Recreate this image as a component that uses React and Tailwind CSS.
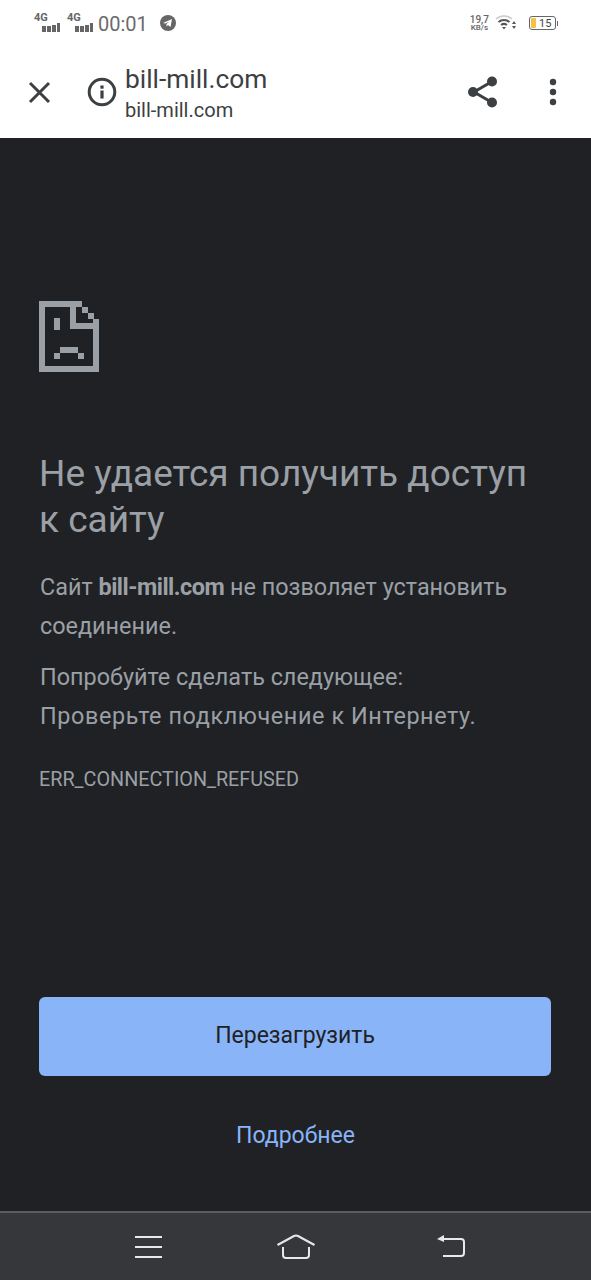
import React from "react";

const font = { fontFamily: "Roboto, sans-serif" };

const Signal = () => (
  <span className="flex flex-col items-start w-[27px]">
    <span className="text-[11px] leading-[10px] font-bold text-[#666]">4G</span>
    <svg width="27" height="10" viewBox="0 0 27 10" className="ml-[1px] mt-[-1px]">
      <rect x="7" y="4" width="4" height="6" fill="#666" />
      <rect x="12" y="4" width="4" height="6" fill="#666" />
      <rect x="17" y="3" width="4" height="7" fill="#666" />
      <rect x="22" y="1" width="3" height="9" fill="#666" />
    </svg>
  </span>
);

const StatusBar = () => (
  <div className="h-[46px] flex items-start justify-between pl-[34px] pr-[33px] pt-[13px]">
    <div className="flex items-start gap-[6px]">
      <Signal />
      <Signal />
      <span className="text-[20px] leading-[22px] text-[#6b6b6b] ml-[-2px]">00:01</span>
      <svg width="16" height="16" viewBox="0 0 16 16" className="ml-[6px] mt-[2px]">
        <circle cx="8" cy="8" r="8" fill="#666" />
        <path d="M3 8l9-4-1.5 8-2.5-2-1.5 1.5V9l3-2.5-4 2z" fill="#fff" />
      </svg>
    </div>
    <div className="flex items-start">
      <div className="flex flex-col items-center text-[#666] font-medium text-[9px] leading-[8px] mt-[2px]">
        <span className="text-[10px] leading-[9px]">19,7</span>
        <span className="text-[8px]">KB/s</span>
      </div>
      <svg width="22" height="18" viewBox="0 0 22 18" className="ml-[6px]">
        <path d="M1 6a12 12 0 0 1 16 0" fill="none" stroke="#ccc" strokeWidth="1.6" />
        <path d="M3.5 9a9 9 0 0 1 11 0" fill="none" stroke="#555" strokeWidth="2" />
        <path d="M6 12a5 5 0 0 1 6 0" fill="none" stroke="#555" strokeWidth="2" />
        <path d="M7 14h4l-2 2.5z" fill="#555" />
        <path d="M19 8l2 3h-4zM17 13h4l-2 3z" fill="#555" />
      </svg>
      <div className="ml-[12px] mt-[3px] flex items-center">
        <div className="w-[27px] h-[14px] border border-[#666] rounded-[3px] flex items-center p-[1px]">
          <span className="w-[5px] h-full bg-[#f5c242] rounded-[1px]" />
          <span className="text-[11px] leading-none text-[#444] ml-[3px]">15</span>
        </div>
        <span className="w-[1px] h-[5px] bg-[#666] ml-[1px]" />
      </div>
    </div>
  </div>
);

const Toolbar = () => (
  <div className="h-[92px] flex items-center pl-[28px] pr-[34px]">
    <svg width="23" height="23" viewBox="0 0 23 23">
      <path d="M2 2l19 19M21 2L2 21" stroke="#3c4043" strokeWidth="3" fill="none" />
    </svg>
    <svg width="30" height="30" viewBox="0 0 30 30" className="ml-[36px]">
      <circle cx="15" cy="15" r="12.8" stroke="#3c4043" strokeWidth="3" fill="none" />
      <rect x="13.4" y="13.5" width="3.2" height="8" fill="#3c4043" />
      <rect x="13.4" y="8.5" width="3.2" height="3.2" fill="#3c4043" />
    </svg>
    <div className="ml-[8px] flex flex-col mt-[5px]">
      <span className="text-[26.3px] leading-[31px] text-[#3c4043]">bill-mill.com</span>
      <span className="text-[20px] leading-[30px] text-[#3c4043]">bill-mill.com</span>
    </div>
    <svg width="32" height="34" viewBox="0 0 32 34" className="ml-auto">
      <path d="M25 6.5L7 17l18 10.5" stroke="#3c4043" strokeWidth="3" fill="none" />
      <circle cx="25" cy="6.5" r="5" fill="#3c4043" />
      <circle cx="6" cy="17" r="5" fill="#3c4043" />
      <circle cx="25" cy="27.5" r="5" fill="#3c4043" />
    </svg>
    <svg width="8" height="28" viewBox="0 0 8 28" className="ml-[50px]">
      <circle cx="4" cy="4" r="3.2" fill="#3c4043" />
      <circle cx="4" cy="14" r="3.2" fill="#3c4043" />
      <circle cx="4" cy="24" r="3.2" fill="#3c4043" />
    </svg>
  </div>
);

const SadPage = () => (
  <svg width="60" height="71" viewBox="0 0 60 71" fill="#9aa0a6" className="ml-[-1px]">
    <rect x="0" y="0" width="43" height="6" />
    <rect x="0" y="0" width="6" height="71" />
    <rect x="0" y="65" width="60" height="6" />
    <rect x="54" y="18" width="6" height="53" />
    <rect x="31" y="0" width="6" height="28" />
    <rect x="31" y="22" width="23" height="6" />
    <rect x="43" y="6" width="6" height="6" />
    <rect x="49" y="12" width="6" height="6" />
    <rect x="15" y="17" width="6" height="12" />
    <rect x="21" y="46" width="18" height="6" />
    <rect x="15" y="52" width="6" height="6" />
    <rect x="39" y="52" width="6" height="6" />
  </svg>
);

const NavBar = () => (
  <div className="h-[69px] bg-[#36373b] border-t-2 border-[#5c5d60] flex items-center pl-[134px] pr-[126px]">
    <svg width="29" height="22" viewBox="0 0 29 22" stroke="#e8e8e8" strokeWidth="2" fill="none">
      <path d="M1 1h27M1 11h27M1 21h27" />
    </svg>
    <svg width="38" height="25" viewBox="0 0 38 25" stroke="#e8e8e8" strokeWidth="2" fill="none" className="ml-[114px]">
      <path d="M0.5 11L17 2q2-1 4 0L37.5 11" />
      <path d="M6 13v8q0 3 3 3h20q3 0 3-3v-8" />
    </svg>
    <svg width="28" height="24" viewBox="0 0 28 24" fill="none" className="ml-auto">
      <path d="M3 4h21q3 0 3 3v11q0 3-3 3H6" stroke="#e8e8e8" strokeWidth="2" />
      <path d="M0 4l7-4v7z" fill="#e8e8e8" />
    </svg>
  </div>
);

export default function App() {
  return (
    <div className="w-[591px] h-[1280px] flex flex-col bg-white" style={font}>
      <StatusBar />
      <Toolbar />
      <main className="flex-1 bg-[#202124] pl-[40px] pr-[40px] pt-[163px] text-[#9aa0a6] flex flex-col">
        <SadPage />
        <h1 className="mt-[79px] ml-[-1px] text-[37px] leading-[46px] font-normal">
          Не удается получить доступ к сайту
        </h1>
        <p className="mt-[25px] text-[23.4px] leading-[39px]">
          Сайт <b className="font-bold tracking-[-0.5px]">bill-mill.com</b> не позволяет установить соединение.
        </p>
        <p className="mt-[12px] text-[23.4px] leading-[39px]">
          Попробуйте сделать следующее:
          <br />
          <span className="tracking-[0.6px]">Проверьте подключение к Интернету.</span>
        </p>
        <p className="mt-[32px] ml-[-1px] text-[19.8px] leading-[24px]">ERR_CONNECTION_REFUSED</p>
        <button className="mt-auto ml-[-1px] h-[79px] w-[512px] rounded-[6px] bg-[#8ab4f8] text-[#202124] text-[23px]">
          Перезагрузить
        </button>
        <a className="mt-[45px] mb-[60px] text-center text-[23px] leading-[30px] text-[#8ab4f8]">
          Подробнее
        </a>
      </main>
      <NavBar />
    </div>
  );
}
